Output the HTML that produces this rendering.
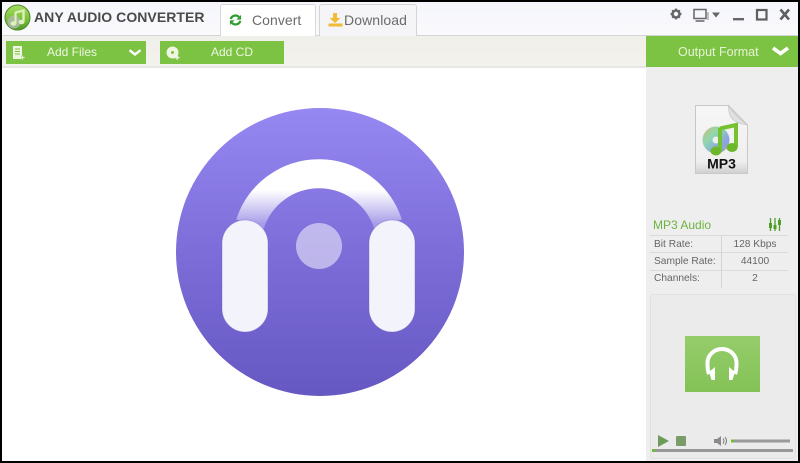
<!DOCTYPE html>
<html><head><meta charset="utf-8">
<style>
html,body{margin:0;padding:0;background:#000}
#app{position:relative;width:800px;height:463px;overflow:hidden;background:#000;font-family:"Liberation Sans",sans-serif}
.a{position:absolute}
.t{position:absolute;white-space:nowrap;line-height:1}
</style></head>
<body><div id="app">
<div class="a" style="left:2px;top:2px;width:796px;height:459px;background:#fff"></div>
<div class="a" style="left:2px;top:2px;width:796px;height:33px;background:linear-gradient(#f5f6fb,#fafafd)"></div>
<div class="a" style="left:2px;top:35px;width:796px;height:1px;background:#d4d4d4"></div>
<div class="a" style="left:2px;top:36px;width:644px;height:30px;background:linear-gradient(#f0efe9,#f3f2ee)"></div>
<div class="a" style="left:2px;top:66px;width:644px;height:2px;background:#e6e6e4"></div>

<!-- logo -->
<svg class="a" style="left:4px;top:4px" width="27" height="27" viewBox="0 0 27 27">
<defs><linearGradient id="lg" x1="0" y1="0" x2="0" y2="1"><stop offset="0" stop-color="#a6dc62"/><stop offset=".55" stop-color="#7cc23c"/><stop offset="1" stop-color="#4c9a28"/></linearGradient></defs>
<circle cx="13.500" cy="13.500" r="12.500" fill="url(#lg)" stroke="#4f8a2c"/>
<circle cx="10" cy="18" r="6.500" fill="#b0b8aa" opacity=".85"/>
<path d="M11.500 8.500l8-2v11" fill="none" stroke="#dcf0bc" stroke-width="2.400"/>
<path d="M11.500 8v11" fill="none" stroke="#dcf0bc" stroke-width="2.200"/>
<ellipse cx="9.500" cy="19.500" rx="3" ry="2.300" fill="#dcf0bc"/><ellipse cx="17.500" cy="18" rx="3" ry="2.300" fill="#dcf0bc"/>
</svg>
<div class="t" style="left:34px;top:10px;font-size:14px;font-weight:700;color:#4a4a4a;letter-spacing:.05px">ANY AUDIO CONVERTER</div>

<!-- tabs -->
<div class="a" style="left:220px;top:4px;width:96px;height:32px;background:#fff;border:1px solid #d8d8d8;border-bottom:none;border-radius:3px 3px 0 0;box-sizing:border-box"></div>
<svg class="a" style="left:229px;top:14px" width="13" height="12" viewBox="0 0 15 14">
<path d="M2 6A5.500 5 0 0 1 11.500 3.500" fill="none" stroke="#2f9e2f" stroke-width="2.600"/><path d="M14 1v5.500H8.500z" fill="#2f9e2f"/>
<path d="M13 8A5.500 5 0 0 1 3.500 10.500" fill="none" stroke="#2f9e2f" stroke-width="2.600"/><path d="M1 13V7.500h5.500z" fill="#2f9e2f"/>
</svg>
<div class="t" style="left:252px;top:13px;font-size:14px;color:#6b6b6b;letter-spacing:.05px">Convert</div>

<div class="a" style="left:319px;top:4px;width:98px;height:32px;background:#f5f5f7;border:1px solid #d4d4d4;border-bottom:none;border-radius:3px 3px 0 0;box-sizing:border-box"></div>
<svg class="a" style="left:328px;top:13px" width="15" height="14" viewBox="0 0 15 14">
<path d="M5 0h4v5h3.500L7 10 1.500 5H5z" fill="#f0bc35"/><rect x="0.500" y="10.500" width="14" height="3" fill="#f0bc35"/>
</svg>
<div class="t" style="left:344px;top:13px;font-size:14px;color:#6b6b6b;letter-spacing:.1px">Download</div>

<!-- window controls -->
<svg class="a" style="left:668px;top:5px" width="125" height="18" viewBox="0 0 125 18">
<circle cx="8" cy="9" r="3.500" fill="none" stroke="#666" stroke-width="2.600"/>
<path d="M8 3.500v2M8 12.500v2M2.500 9h2M11.500 9h2M4.200 5.200l1.400 1.400M10.400 11.400l1.400 1.400M11.800 5.200l-1.400 1.400M5.600 11.400l-1.400 1.400" stroke="#666" stroke-width="1.800"/>
<rect x="26" y="4.500" width="12" height="9" fill="none" stroke="#666" stroke-width="1.500"/><path d="M27.500 16h9" stroke="#666" stroke-width="1.500"/>
<path d="M40 7v8" stroke="#888" stroke-width="1"/>
<path d="M44 7.500h8l-4 5z" fill="#666"/>
<rect x="65" y="13" width="11" height="2.400" fill="#666"/>
<rect x="89" y="5" width="9.500" height="9.500" fill="none" stroke="#5f5f5f" stroke-width="2.200"/>
<path d="M112.500 4.500l8.500 10M121 4.500l-8.500 10" stroke="#5f5f5f" stroke-width="2.600"/>
</svg>

<!-- toolbar -->
<div class="a" style="left:6px;top:41px;width:140px;height:23px;background:#7cc243"></div>
<svg class="a" style="left:12px;top:46px" width="13" height="14" viewBox="0 0 13 14">
<path d="M1 0h9v9l-1 1v3H1z" fill="#eef6e2"/><path d="M3 3h5M3 5.500h5M3 8h5" stroke="#7cc243"/><path d="M8 11.500h4.500M10.200 9.500v4" stroke="#eef6e2" stroke-width="1.200"/>
</svg>
<div class="t" style="left:47px;top:46px;font-size:12px;color:#eef6e2">Add Files</div>
<svg class="a" style="left:128px;top:49px" width="14" height="8" viewBox="0 0 14 8"><path d="M1.500 1.200L7 5.500l5.500-4.300" fill="none" stroke="#fff" stroke-width="2.400"/></svg>

<div class="a" style="left:160px;top:41px;width:124px;height:23px;background:#7cc243"></div>
<svg class="a" style="left:166px;top:46px" width="14" height="14" viewBox="0 0 14 14">
<circle cx="6.500" cy="6.500" r="6" fill="#eef6e2"/><circle cx="6.500" cy="6.500" r="1.500" fill="#7cc243"/><path d="M9 11.500h4.500M11.200 9.200v4.600" stroke="#eef6e2" stroke-width="1.400"/>
</svg>
<div class="t" style="left:211px;top:46px;font-size:12px;color:#eef6e2">Add CD</div>

<!-- right panel -->
<div class="a" style="left:646px;top:36px;width:152px;height:425px;background:#eeeeee"></div>
<div class="a" style="left:646px;top:36px;width:152px;height:31px;background:#7cc243"></div>
<div class="t" style="left:678px;top:46px;font-size:12.500px;color:#e6f4d6">Output Format</div>
<svg class="a" style="left:771px;top:46px" width="19" height="11" viewBox="0 0 19 11"><path d="M2 2l7.500 5.500L17 2" fill="none" stroke="#fff" stroke-width="3.600"/></svg>

<!-- mp3 icon -->
<svg class="a" style="left:694px;top:104px" width="56" height="72" viewBox="0 0 56 72">
<defs><linearGradient id="fg" x1="0" y1="0" x2="0" y2="1"><stop offset="0" stop-color="#f6f6f6"/><stop offset=".82" stop-color="#efefef"/><stop offset="1" stop-color="#cfcfcf"/></linearGradient>
<linearGradient id="cd" x1="0" y1="0" x2="1" y2="1"><stop offset="0" stop-color="#d0b870"/><stop offset=".35" stop-color="#90d8b0"/><stop offset=".7" stop-color="#8aa4e0"/><stop offset="1" stop-color="#a8a8a8"/></linearGradient></defs>
<path d="M1.500 1.500h33L53.500 21v48.500h-52z" fill="url(#fg)" stroke="#c8c8c8"/>
<path d="M34.500 1.500c0 10 2 17 19 19.500-8-6-14-12-19-19.500z" fill="#e0e0e0" stroke="#c4c4c4" stroke-width=".7"/>
<circle cx="22" cy="36" r="13.500" fill="url(#cd)"/><circle cx="22" cy="36" r="3.500" fill="#eee"/>
<path d="M26 24.500l16-3.500v22" fill="none" stroke="#74c22e" stroke-width="4"/><path d="M26 24v23" stroke="#74c22e" stroke-width="4"/>
<ellipse cx="22" cy="47" rx="5.500" ry="4.500" fill="#6cb82a"/><ellipse cx="38" cy="43.500" rx="5.500" ry="4.500" fill="#6cb82a"/>
<text x="27.500" y="64.500" font-family="Liberation Sans" font-size="14" font-weight="700" text-anchor="middle" fill="#111">MP3</text>
</svg>

<!-- info -->
<div class="t" style="left:653px;top:219px;font-size:12px;color:#6db33f">MP3 Audio</div>
<svg class="a" style="left:768px;top:218px" width="14" height="13" viewBox="0 0 14 13">
<path d="M2.500 0v13M7 0v13M11.500 0v13" stroke="#4f9e28" stroke-width="1.300"/><rect x="1" y="5" width="3" height="5" fill="#4f9e28"/><rect x="5.500" y="7" width="3" height="4" fill="#4f9e28"/><rect x="10" y="2" width="3" height="5" fill="#4f9e28"/>
</svg>
<div class="a" style="left:650px;top:235px;width:138px;height:1px;background:#dadada"></div>
<div class="a" style="left:650px;top:252px;width:138px;height:1px;background:#dadada"></div>
<div class="a" style="left:650px;top:270px;width:138px;height:1px;background:#dadada"></div>
<div class="a" style="left:721px;top:236px;width:1px;height:52px;background:#d4d4d4"></div>
<div class="t" style="left:654px;top:240px;font-size:10.200px;color:#666">Bit Rate:</div>
<div class="t" style="left:654px;top:257px;font-size:10.200px;color:#666">Sample Rate:</div>
<div class="t" style="left:654px;top:274px;font-size:10.200px;color:#666">Channels:</div>
<div class="t" style="left:722px;width:66px;text-align:center;top:240px;font-size:10.200px;color:#666">128 Kbps</div>
<div class="t" style="left:722px;width:66px;text-align:center;top:257px;font-size:10.200px;color:#666">44100</div>
<div class="t" style="left:722px;width:66px;text-align:center;top:274px;font-size:10.200px;color:#666">2</div>

<!-- player -->
<div class="a" style="left:650px;top:294px;width:146px;height:165px;background:#ebebeb;border:1px solid #e0e0e0;border-radius:3px;box-sizing:border-box"></div>
<div class="a" style="left:685px;top:336px;width:75px;height:56px;background:linear-gradient(#95cd6b,#84c256)"></div>
<svg class="a" style="left:703px;top:345px" width="38" height="38" viewBox="0 0 38 38">
<path d="M6 29C4.500 26 4.500 22 4.500 18A14.500 14 0 0 1 33.500 18C33.500 22 33.500 26 32 29" fill="none" stroke="#fff" stroke-width="4"/>
<path d="M6 27l6-5v13H8.500zM32 27l-6-5v13h3.500z" fill="#fff"/>
</svg>
<svg class="a" style="left:658px;top:434px" width="132" height="14" viewBox="0 0 132 14">
<path d="M0 1l11 6-11 6z" fill="#6f9b5a"/>
<rect x="18" y="2" width="10" height="10" rx="1" fill="#7a9c68"/>
<path d="M56 5h3l4-3v10l-4-3h-3z" fill="#8a8a8a"/>
<path d="M65 4.500q2 2.500 0 5M67 3q3 4 0 8" fill="none" stroke="#777" stroke-width="1"/>
<rect x="73" y="5.500" width="59" height="3" fill="#999"/><rect x="73" y="5.500" width="3" height="3" fill="#6cc030"/>
</svg>
<div class="a" style="left:652px;top:449px;width:141px;height:3px;background:#999"></div>
<div class="a" style="left:652px;top:449px;width:3px;height:3px;background:#6cc030"></div>

<!-- main logo -->
<svg class="a" style="left:170px;top:100px" width="300" height="300" viewBox="170 100 300 300">
<defs>
<linearGradient id="bg" x1="0" y1="0" x2="0" y2="1"><stop offset="0" stop-color="#9688f2"/><stop offset=".5" stop-color="#7c6dd8"/><stop offset="1" stop-color="#6658c2"/></linearGradient>
<linearGradient id="arc" gradientUnits="userSpaceOnUse" x1="0" y1="190" x2="0" y2="224"><stop offset="0" stop-color="#fff"/><stop offset="1" stop-color="#fff" stop-opacity=".3"/></linearGradient>
</defs>
<circle cx="320" cy="252" r="144" fill="url(#bg)"/>
<path d="M250 224A72.500 72.500 0 0 1 388 224" fill="none" stroke="url(#arc)" stroke-width="29"/>
<circle cx="319" cy="246" r="23" fill="#fff" fill-opacity=".5"/>
<rect x="222" y="220" width="46" height="112" rx="23" fill="#f3f3fb" stroke="#6a5cc8" stroke-opacity=".35"/>
<rect x="369" y="220" width="46" height="112" rx="23" fill="#f3f3fb" stroke="#6a5cc8" stroke-opacity=".35"/>
</svg>
</div></body></html>
